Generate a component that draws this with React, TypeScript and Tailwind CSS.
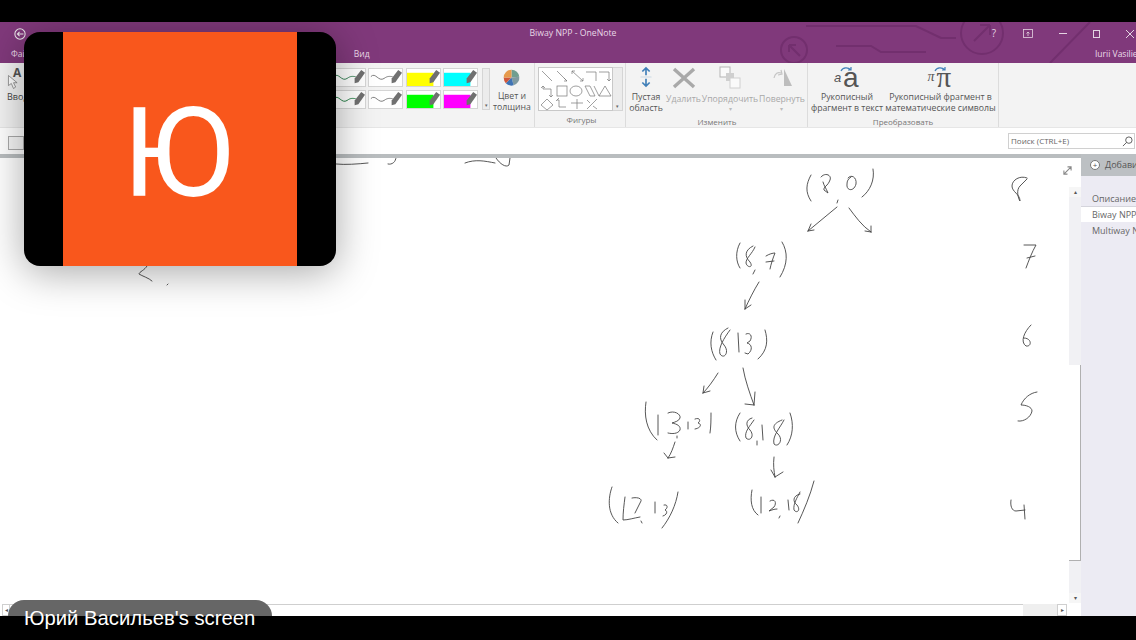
import { FC, ReactNode } from "react";

const font = "font-['Open_Sans','Noto_Sans',sans-serif]";

// handwriting on the page, in screen coordinates (viewBox starts at y=158)
const strokes = [
  // bits peeking out at the top of the page
  "M336 164 C345 165 358 164 368 163",
  "M388 164 C392 165 396 162 396 157",
  "M465 163 C475 159 485 161 495 163 M496 158 C500 164 506 168 509 165 L510 158",
  // left-over scribble under the video tile
  "M147 266 C145 270 139 272 139 274 C142 276 149 278 152 281 M167 285 L168 284",
  // (8,0)
  "M811 175 C806 184 805 192 811 201",
  "M821 177 C825 172 832 175 830 180 C828 186 823 187 824 190 L828 193 C826 188 824 186 823 182",
  "M848 178 C851 174 857 177 856 184 C854 192 846 191 847 184 C847 181 848 179 851 177",
  "M838 200 L837 203",
  "M873 169 C875 180 870 191 862 197",
  "M837 207 L808 231 M808 231 L814 230 M808 231 L811 224",
  "M849 208 C855 216 862 226 871 232 M871 232 L871 226 M871 232 L865 231",
  // (8,7)
  "M740 243 C735 252 736 262 740 268",
  "M753 246 C745 250 744 256 750 262 C754 268 747 268 746 263 C746 258 752 254 755 247",
  "M755 270 L753 274",
  "M766 256 C769 254 773 253 775 253 C773 258 771 264 770 269 M766 262 L774 261",
  "M782 242 C788 252 788 264 780 277",
  "M759 282 C754 290 749 300 745 309 M745 309 L745 300 M745 309 L751 305",
  // (8,13)
  "M713 332 C709 342 711 352 716 360",
  "M728 328 C720 332 718 338 724 345 C730 352 724 360 720 354 C718 348 724 338 730 330",
  "M738 333 L739 352",
  "M746 334 C750 332 753 336 750 341 L747 343 C752 344 753 350 748 354 L745 353",
  "M765 330 C768 340 768 350 758 359",
  "M718 373 C713 381 708 388 703 393 M703 393 L710 391 M703 393 L704 386",
  "M743 368 C745 380 750 394 754 405 M754 405 L755 392 M754 405 L745 404",
  // (13,13)
  "M646 402 C644 415 646 430 657 440",
  "M658 415 L658 435",
  "M668 413 C674 410 681 414 680 418 C679 421 675 422 672 423 C677 424 681 426 680 430 C678 434 672 434 668 433",
  "M677 436 L677 438",
  "M688 422 L688 429",
  "M695 419 C700 417 701 421 698 423 C702 424 701 428 695 429",
  "M711 413 C711 420 711 426 710 433",
  "M675 442 C673 448 671 454 668 458 M668 458 L664 453 M668 458 L675 457",
  // (8,18)
  "M740 413 C734 422 734 432 740 441",
  "M752 418 C745 420 746 426 750 430 C755 436 750 442 746 438 C744 432 750 426 754 420",
  "M757 441 L757 445",
  "M762 425 L763 440",
  "M782 420 C772 424 772 428 778 434 C784 440 778 448 774 444 C772 436 780 428 784 420",
  "M790 413 C794 424 793 436 787 445",
  "M774 457 C773 465 774 471 775 477 M775 477 L771 470 M775 477 L783 472",
  // (13,13) bottom row
  "M612 487 C608 498 607 514 618 523",
  "M625 497 C624 505 623 512 623 520 C628 520 634 518 640 517",
  "M632 498 C636 497 642 498 641 501 L635 513",
  "M641 521 L642 523",
  "M655 502 L655 513",
  "M664 505 C668 504 668 508 665 510 C668 511 667 515 663 516",
  "M678 492 C676 505 670 518 662 528",
  // (12,18)
  "M752 490 C750 500 751 510 758 515",
  "M761 497 L761 513",
  "M770 501 C775 498 777 503 774 507 L769 511 C772 510 774 509 777 509",
  "M780 516 L779 518",
  "M788 500 L789 510",
  "M800 494 C792 496 793 502 797 505 C801 510 797 514 794 510 C793 504 797 498 800 492",
  "M814 481 C810 496 804 510 798 523",
  // level numbers down the right side
  "M1027 178 C1020 175 1012 180 1012 186 C1012 192 1020 194 1020 201 C1018 198 1016 190 1020 186 L1027 179",
  "M1024 245 L1036 245 C1032 252 1029 260 1026 268 M1027 258 L1035 256",
  "M1031 325 C1024 332 1020 342 1026 346 C1032 347 1032 338 1024 338",
  "M1037 392 C1030 393 1024 398 1021 405 C1026 405 1032 407 1032 411 C1031 417 1024 422 1018 421",
  "M1011 500 C1010 506 1012 511 1016 511 L1025 510 M1024 505 C1024 510 1025 514 1025 519",
];

// pen colours: swatch fill, ink stroke, ribbon gallery rows
const pens = [
  { ink: "#2f7d4f", bg: "" },
  { ink: "#777777", bg: "" },
  { ink: "", bg: "#ffff00" },
  { ink: "", bg: "#00ffff" },
  { ink: "#1c7a3e", bg: "" },
  { ink: "#777777", bg: "" },
  { ink: "", bg: "#00ff00" },
  { ink: "", bg: "#ff00ff" },
];

const PenCell: FC<{ ink: string; bg: string }> = ({ ink, bg }) => (
  <div className="h-[19px] w-[35px] border border-[#d5d5d5] bg-white">
    <svg viewBox="0 0 35 18" className="h-full w-full" preserveAspectRatio="none">
      {bg ? <rect x="0" y="4" width="28" height="14" fill={bg} /> : null}
      {ink ? (
        <path d="M2 8 C7 3 10 14 16 10 C20 7 22 8 25 8" fill="none" stroke={ink} strokeWidth="1" />
      ) : null}
      <path d="M24 10 L31 1 L35 4 L28 14 L24 15 Z" fill="#707070" />
    </svg>
  </div>
);

const GroupLabel: FC<{ children: ReactNode }> = ({ children }) => (
  <div className="h-[14px] text-center text-[8px] leading-[14px] text-[#777]">{children}</div>
);

const BigLabel: FC<{ top: string; bottom?: string; muted?: boolean; caret?: boolean }> = ({
  top,
  bottom,
  muted,
  caret,
}) => (
  <div className={`text-center text-[8.7px] leading-[11px] whitespace-nowrap ${muted ? "text-[#a8a8a8]" : "text-[#555]"}`}>
    <div>{top}</div>
    {bottom ? <div>{bottom}</div> : null}
    {caret ? <div className="text-[6px] leading-[8px] text-[#bbb]">▾</div> : null}
  </div>
);

const shapes = (
  <svg viewBox="0 0 74 43" className="h-[43px] w-[74px]" fill="none" stroke="#777" strokeWidth="0.7">
    <path d="M3 3 L13 13 M18 3 L28 13 M25 10 L28 13 L25 13 M33 3 L44 13 M33 6 L33 3 L36 3 M41 13 L44 13 L44 10" />
    <path d="M47 4 L57 4 L57 13 M60 4 L70 4 L70 13 M68 11 L70 13 L72 11" />
    <path d="M4 18 L4 21 L12 21 L12 29 M2 20 L4 18 L6 20 M10 27 L12 29 L14 27" />
    <rect x="18" y="18" width="10" height="10" />
    <ellipse cx="37" cy="23" rx="6" ry="5" />
    <path d="M46 18 L51 18 L56 28 L51 28 Z M55 18 L60 28" />
    <path d="M66 18 L72 28 L60 28 Z" />
    <path d="M8 31 L14 37 L8 42 L2 37 Z" />
    <path d="M18 32 L20 32 L20 39 L27 39 M17 33 L20 30" />
    <path d="M32 35 L44 35 M38 31 L38 41" />
    <path d="M48 41 L58 31 M48 32 L51 35 M54 38 L58 41" />
  </svg>
);

const App: FC = () => (
  <div className={`relative flex h-[640px] w-[1136px] flex-col overflow-hidden bg-black ${font}`}>
    <div className="h-[22px] shrink-0" />

    <div className="flex min-h-0 flex-1 flex-col bg-white">
      {/* title bar with the tabs */}
      <div className="relative h-[41px] shrink-0 overflow-hidden bg-[#80397b] text-white">
        <svg viewBox="0 0 360 41" className="absolute top-0 right-0 h-[41px] w-[360px]" fill="none" stroke="#722f6e" strokeWidth="2">
          <path d="M30 4 L140 4 L165 16 L180 16 M60 24 L95 24 L105 30 L150 30" />
          <circle cx="18" cy="28" r="13" />
          <path d="M13 23 L24 34 M13 23 L13 30 M13 23 L20 23" />
          <circle cx="206" cy="11" r="21" />
          <path d="M198 19 L214 3 M214 3 L204 3 M214 3 L214 13" />
          <path d="M274 41 L314 0" />
        </svg>
        <div className="relative flex h-[23px] items-center">
          <svg viewBox="0 0 14 14" className="ml-[14px] h-3 w-3" fill="none" stroke="#eee" strokeWidth="1.2">
            <circle cx="7" cy="7" r="6" />
            <path d="M11 7 L4 7 M6.5 4.5 L4 7 L6.5 9.5" />
          </svg>
          <div className="absolute top-0 left-0 flex h-full w-full items-center justify-center pl-[10px] text-[8.7px] text-[#e8d8e6]">
            Biway NPP - OneNote
          </div>
          <div className="ml-auto flex items-center text-[#e4d4e2]">
            <span className="mr-[12px] w-[34px] text-center text-[10px]">?</span>
            <svg viewBox="0 0 10 9" className="mr-[26px] h-[9px] w-[10px]" fill="none" stroke="#e4d4e2" strokeWidth="0.8">
              <rect x="0.5" y="0.5" width="9" height="8" />
              <path d="M5 7 L5 3 M3.5 4.5 L5 3 L6.5 4.5" />
            </svg>
            <div className="mr-[26px] h-px w-[8px] bg-[#e4d4e2]" />
            <div className="mr-[25px] h-[8px] w-[7px] border border-[#e4d4e2]" />
            <svg viewBox="0 0 10 10" className="mr-[1px] h-[10px] w-[10px]" stroke="#e4d4e2" strokeWidth="1">
              <path d="M1 1 L9 9 M9 1 L1 9" />
            </svg>
          </div>
        </div>
        <div className="relative flex h-[18px] items-center text-[8.5px] text-[#ecdcea]">
          <span className="ml-[11px]">Файл</span>
          <span className="ml-[321px]">Вид</span>
          <span className="ml-auto w-[41px] overflow-hidden whitespace-nowrap">Iurii Vasiliev</span>
        </div>
      </div>

      {/* ribbon */}
      <div className="flex h-[64px] shrink-0 bg-[#f3f3f3]">
        <div className="w-[331px] shrink-0 pl-[7px]">
          <div className="flex h-[28px] items-end">
            <svg viewBox="0 0 18 22" className="h-[18px] w-[13px]" fill="#fff" stroke="#777" strokeWidth="1">
              <path d="M2 2 L2 16 L6 13 L9 20 L12 18 L9 12 L14 12 Z" />
            </svg>
            <span className="-ml-[7px] mb-[9px] text-[12px] font-bold text-[#555]">A</span>
          </div>
          <div className="text-[9px] leading-[12px] text-[#444]">Ввод</div>
        </div>

        <div className="flex w-[204px] shrink-0 flex-col border-r border-[#dcdcdc]">
          <div className="flex h-[50px] pt-[5px]">
            <div className="grid h-[41px] w-[147px] grid-cols-4 gap-x-[2px] gap-y-[2px]">
              {pens.map((pen, i) => (
                <PenCell key={i} ink={pen.ink} bg={pen.bg} />
              ))}
            </div>
            <div className="ml-[4px] flex h-[42px] w-[8px] flex-col items-center justify-end border border-[#d5d5d5] bg-[#ececec] text-[5px] leading-[8px] text-[#666]">
              ▾
            </div>
            <div className="flex flex-col items-center pt-[1px] pl-[3px]">
              <svg viewBox="0 0 24 24" className="h-[21px] w-[21px]">
                <path d="M12 12 L12 1 A11 11 0 0 1 23 11 Z" fill="#6f9e8f" />
                <path d="M12 12 L23 11 A11 11 0 0 1 15 23 Z" fill="#7f9aa0" />
                <path d="M12 12 L15 23 A11 11 0 0 1 4 20 Z" fill="#3f74b5" />
                <path d="M12 12 L4 20 A11 11 0 0 1 1 12 Z" fill="#d0573a" />
                <path d="M12 12 L1 12 A11 11 0 0 1 12 1 Z" fill="#e69a4c" />
              </svg>
              <div className="mt-[5px]">
                <BigLabel top="Цвет и" bottom="толщина" />
              </div>
            </div>
          </div>
        </div>

        <div className="flex w-[91px] shrink-0 flex-col border-r border-[#dcdcdc] pl-[3px]">
          <div className="flex h-[51px] pt-[4px]">
            <div className="h-[44px] w-[75px] border border-[#c8c8c8] bg-white">{shapes}</div>
            <div className="flex h-[44px] w-[10px] flex-col items-center justify-end border border-l-0 border-[#d5d5d5] bg-[#ececec] text-[5px] leading-[8px] text-[#666]">
              ▾
            </div>
          </div>
          <div className="mt-[1px]">
            <GroupLabel>Фигуры</GroupLabel>
          </div>
        </div>

        <div className="flex w-[182px] shrink-0 flex-col border-r border-[#dcdcdc] pl-[1px]">
          <div className="flex h-[51px] pt-[3px]">
            <div className="flex w-[38px] flex-col items-center">
              <svg viewBox="0 0 14 24" className="h-[24px] w-[14px]" fill="none" stroke="#3f7fb8" strokeWidth="1.8">
                <path d="M7 10 L7 2 M3 6 L7 2 L11 6 M7 14 L7 22 M3 18 L7 22 L11 18" />
                <path d="M1 12 L13 12" stroke="#bcd0e0" strokeWidth="0.8" />
              </svg>
              <div className="mt-[4px]">
                <BigLabel top="Пустая" bottom="область" />
              </div>
            </div>
            <div className="flex w-[37px] flex-col items-center">
              <svg viewBox="0 0 24 24" className="h-[24px] w-[24px]" stroke="#a9a9a9" strokeWidth="3.4">
                <path d="M2 3 L22 21 M22 3 L2 21" />
              </svg>
              <div className="mt-[4px]">
                <BigLabel top="Удалить" muted />
              </div>
            </div>
            <div className="flex w-[56px] flex-col items-center">
              <svg viewBox="0 0 24 24" className="h-[24px] w-[24px]">
                <rect x="2" y="1" width="10" height="10" fill="#fafafa" stroke="#b5b5b5" />
                <rect x="8" y="7" width="8" height="8" fill="#cfcfcf" />
                <rect x="12" y="12" width="10" height="10" fill="#fafafa" stroke="#d0d0d0" />
              </svg>
              <div className="mt-[4px]">
                <BigLabel top="Упорядочить" muted caret />
              </div>
            </div>
            <div className="flex w-[48px] flex-col items-center">
              <svg viewBox="0 0 24 24" className="h-[24px] w-[24px]">
                <path d="M14 3 L22 20 L14 20 Z" fill="#bdbdbd" />
                <path d="M4 12 C5 7 8 6 11 7 M11 4 L12 8 L8 9" fill="none" stroke="#c5c5c5" strokeWidth="1.2" />
              </svg>
              <div className="mt-[4px]">
                <BigLabel top="Повернуть" muted caret />
              </div>
            </div>
          </div>
          <div className="mt-[1px]">
            <GroupLabel>Изменить</GroupLabel>
          </div>
        </div>

        <div className="flex w-[191px] shrink-0 flex-col border-r border-[#dcdcdc]">
          <div className="flex h-[51px] pt-[3px]">
            <div className="flex w-[78px] flex-col items-center">
              <div className="relative h-[24px] w-[26px] font-['Liberation_Sans',sans-serif] leading-none text-[#555]">
                <span className="absolute top-[5px] left-[0px] text-[13px] italic">a</span>
                <span className="absolute top-[-2px] left-[9px] text-[28px]">a</span>
                <svg viewBox="0 0 14 6" className="absolute top-0 left-[6px] h-[6px] w-[14px]" fill="none" stroke="#3f7fb8" strokeWidth="1.2">
                  <path d="M1 5 C3 1 8 1 11 4 M8 4 L11 4 L11 1" />
                </svg>
              </div>
              <div className="mt-[4px]">
                <BigLabel top="Рукописный" bottom="фрагмент в текст" />
              </div>
            </div>
            <div className="flex w-[109px] flex-col items-center">
              <div className="relative h-[24px] w-[26px] font-['Liberation_Serif',serif] leading-none text-[#555]">
                <span className="absolute top-[4px] left-[0px] text-[14px] italic">π</span>
                <span className="absolute top-[-3px] left-[9px] text-[29px]">π</span>
                <svg viewBox="0 0 14 6" className="absolute top-0 left-[6px] h-[6px] w-[14px]" fill="none" stroke="#3f7fb8" strokeWidth="1.2">
                  <path d="M1 5 C3 1 8 1 11 4 M8 4 L11 4 L11 1" />
                </svg>
              </div>
              <div className="mt-[4px]">
                <BigLabel top="Рукописный фрагмент в" bottom="математические символы" />
              </div>
            </div>
          </div>
          <div className="mt-[1px]">
            <GroupLabel>Преобразовать</GroupLabel>
          </div>
        </div>
      </div>

      {/* section tabs + search */}
      <div className="flex h-[27px] shrink-0 items-center border-t border-[#e6e6e6] bg-white">
        <div className="mt-[4px] ml-[8px] h-[14px] w-[16px] border border-[#aaa] bg-[#f7f7f7]" />
        <div className="mr-[1px] ml-auto flex h-[16px] w-[127px] items-center border border-[#d0d0d0] pl-[2px] text-[8px] text-[#666]">
          Поиск (CTRL+E)
          <svg viewBox="0 0 12 12" className="mr-[1px] ml-auto h-[11px] w-[11px]" fill="none" stroke="#555" strokeWidth="1">
            <circle cx="7.5" cy="4.5" r="3.5" />
            <path d="M5 7 L1 11" />
          </svg>
        </div>
      </div>

      <div className="flex min-h-0 flex-1">
        {/* page + scrollbars */}
        <div className="flex min-w-0 flex-1 flex-col">
          <div className="h-[4px] shrink-0 bg-[#b9bdbf]" />
          <div className="flex min-h-0 flex-1">
            <div className="flex min-w-0 flex-1 flex-col">
              <div className="relative min-h-0 flex-1 bg-white">
                <svg viewBox="0 158 1069 446" className="h-full w-full" fill="none" stroke="#444" strokeWidth="0.9" strokeLinecap="round">
                  {strokes.map((d, i) => (
                    <path key={i} d={d} />
                  ))}
                </svg>
                <svg viewBox="0 0 10 10" className="absolute top-[8px] right-[-3px] h-[9px] w-[9px]" fill="none" stroke="#888" strokeWidth="1.2">
                  <path d="M1 9 L9 1 M5 1 L9 1 L9 5 M1 5 L1 9 L5 9" />
                </svg>
              </div>
              <div className="flex h-[12px] shrink-0 items-stretch">
                <div className="ml-[2px] w-[8px] border border-[#cfcfcf] bg-white text-center text-[6px] leading-[10px] text-[#555]">◂</div>
                <div className="w-[1013px] border-t border-[#cfcfcf] bg-white" />
                <div className="w-[34px] bg-[#efefef]" />
                <div className="w-[10px] border border-[#cfcfcf] bg-white text-center text-[6px] leading-[10px] text-[#555]">▸</div>
              </div>
            </div>
            <div className="flex w-[12px] shrink-0 flex-col bg-white pt-[29px]">
              <div className="h-[10px] shrink-0 bg-[#f6f6f6] text-center text-[6px] leading-[10px] text-[#555]">▴</div>
              <div className="flex flex-1 flex-col bg-[#f1f1f4] pt-[168px]">
                <div className="h-[196px] border-r border-b border-[#b0b0b0] bg-white" />
              </div>
              <div className="h-[10px] shrink-0 bg-[#f6f6f6] text-center text-[6px] leading-[10px] text-[#555]">▾</div>
              <div className="h-[13px] shrink-0" />
            </div>
          </div>
        </div>

        {/* page list */}
        <div className="w-[55px] shrink-0 overflow-hidden bg-[#ecebf3] text-[9px] whitespace-nowrap text-[#666]">
          <div className="flex h-[22px] items-center bg-[#bcc0c3] pl-[9px] text-[#555]">
            <span className="mr-[5px] flex h-[10px] w-[10px] shrink-0 items-center justify-center rounded-full border border-[#777] bg-white text-[8px] leading-none">+</span>
            Добавить страницу
          </div>
          <div className="mt-[15px] flex h-[16px] items-center border-b border-[#d5d5dc] pl-[11px]">Описание</div>
          <div className="flex h-[15px] items-center bg-white pl-[11px]">Biway NPP</div>
          <div className="mt-[1px] flex h-[15px] items-center pl-[11px]">Multiway NPP</div>
        </div>
      </div>
    </div>

    <div className="h-[24px] shrink-0" />

    {/* video tile over the shared screen */}
    <div className="absolute top-[32px] left-[24px] flex h-[234px] w-[312px] justify-center overflow-hidden rounded-[16px] bg-black shadow-[0_6px_40px_rgba(0,0,0,0.35)]">
      <div className="flex h-full w-[234px] items-center justify-center bg-[#f9571c] pt-[10px] pr-[4px] font-['Roboto',sans-serif] text-[124px] leading-none text-white">
        Ю
      </div>
    </div>

    {/* name tag */}
    <div className="absolute top-[600px] left-[8px] h-[16px] w-[264px] rounded-t-[16px] bg-[#666666]" />
    <div className="absolute top-[606px] left-[24px] font-['Liberation_Sans',sans-serif] text-[20.3px] leading-[24px] whitespace-nowrap text-white">
      Юрий Васильев's screen
    </div>
  </div>
);

export default App;
